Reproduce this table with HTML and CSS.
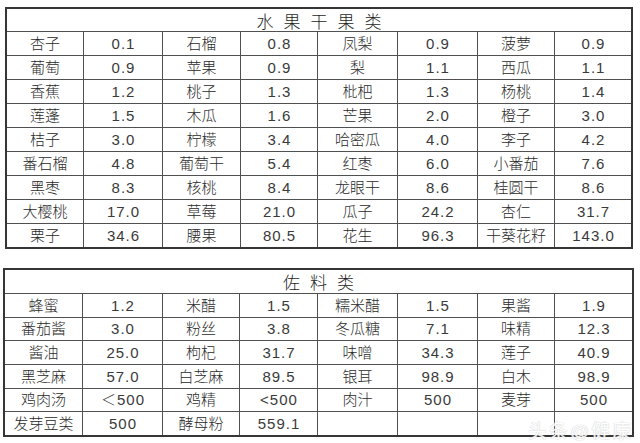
FILE: index.html
```html
<!DOCTYPE html>
<html lang="zh">
<head>
<meta charset="utf-8">
<title>水果干果类 / 佐料类</title>
<link rel="stylesheet" href="styles.css">
</head>
<body>
<div class="page">
  <div class="tbl t1">
    <div class="title">水果干果类</div>
    <div class="c">杏子</div><div class="c n">0.1</div><div class="c">石榴</div><div class="c n">0.8</div><div class="c">凤梨</div><div class="c n">0.9</div><div class="c">菠萝</div><div class="c n">0.9</div>
    <div class="c">葡萄</div><div class="c n">0.9</div><div class="c">苹果</div><div class="c n">0.9</div><div class="c">梨</div><div class="c n">1.1</div><div class="c">西瓜</div><div class="c n">1.1</div>
    <div class="c">香蕉</div><div class="c n">1.2</div><div class="c">桃子</div><div class="c n">1.3</div><div class="c">枇杷</div><div class="c n">1.3</div><div class="c">杨桃</div><div class="c n">1.4</div>
    <div class="c">莲蓬</div><div class="c n">1.5</div><div class="c">木瓜</div><div class="c n">1.6</div><div class="c">芒果</div><div class="c n">2.0</div><div class="c">橙子</div><div class="c n">3.0</div>
    <div class="c">桔子</div><div class="c n">3.0</div><div class="c">柠檬</div><div class="c n">3.4</div><div class="c">哈密瓜</div><div class="c n">4.0</div><div class="c">李子</div><div class="c n">4.2</div>
    <div class="c">番石榴</div><div class="c n">4.8</div><div class="c">葡萄干</div><div class="c n">5.4</div><div class="c">红枣</div><div class="c n">6.0</div><div class="c">小番茄</div><div class="c n">7.6</div>
    <div class="c">黑枣</div><div class="c n">8.3</div><div class="c">核桃</div><div class="c n">8.4</div><div class="c">龙眼干</div><div class="c n">8.6</div><div class="c">桂圆干</div><div class="c n">8.6</div>
    <div class="c">大樱桃</div><div class="c n">17.0</div><div class="c">草莓</div><div class="c n">21.0</div><div class="c">瓜子</div><div class="c n">24.2</div><div class="c">杏仁</div><div class="c n">31.7</div>
    <div class="c">栗子</div><div class="c n">34.6</div><div class="c">腰果</div><div class="c n">80.5</div><div class="c">花生</div><div class="c n">96.3</div><div class="c">干葵花籽</div><div class="c n">143.0</div>
  </div>

  <div class="tbl t2">
    <div class="title">佐料类</div>
    <div class="c">蜂蜜</div><div class="c n">1.2</div><div class="c">米醋</div><div class="c n">1.5</div><div class="c">糯米醋</div><div class="c n">1.5</div><div class="c">果酱</div><div class="c n">1.9</div>
    <div class="c">番茄酱</div><div class="c n">3.0</div><div class="c">粉丝</div><div class="c n">3.8</div><div class="c">冬瓜糖</div><div class="c n">7.1</div><div class="c">味精</div><div class="c n">12.3</div>
    <div class="c">酱油</div><div class="c n">25.0</div><div class="c">枸杞</div><div class="c n">31.7</div><div class="c">味噌</div><div class="c n">34.3</div><div class="c">莲子</div><div class="c n">40.9</div>
    <div class="c">黑芝麻</div><div class="c n">57.0</div><div class="c">白芝麻</div><div class="c n">89.5</div><div class="c">银耳</div><div class="c n">98.9</div><div class="c">白木</div><div class="c n">98.9</div>
    <div class="c">鸡肉汤</div><div class="c n">＜500</div><div class="c">鸡精</div><div class="c n">&lt;500</div><div class="c">肉汁</div><div class="c n">500</div><div class="c">麦芽</div><div class="c n">500</div>
    <div class="c">发芽豆类</div><div class="c n">500</div><div class="c">酵母粉</div><div class="c n">559.1</div><div class="c"></div><div class="c"></div><div class="c"></div><div class="c"></div>
  </div>
  <div class="mark">头条@健康</div>
</div>
</body>
</html>
```

FILE: styles.css
```css
html, body {
  margin: 0;
  padding: 0;
  background: #ffffff;
}
body {
  font-family: "Liberation Sans", "Noto Sans CJK SC", sans-serif;
  color: #2a2a2a;
  width: 640px;
  height: 443px;
  overflow: hidden;
}
.page {
  position: relative;
  width: 640px;
  height: 443px;
}
.tbl {
  display: grid;
  gap: 1px;
  background: #505050;
  border: 2px solid #363636;
}
.t1 {
  margin: 7px 0 0 5px;
  width: 624px;
  grid-template-columns: 76px 78px 77px 76px 79px 79px 76px 76px;
  grid-template-rows: 22px repeat(9, 23px);
}
.t2 {
  margin: 19px 0 0 3px;
  width: 627px;
  grid-template-columns: 77px 79px 76px 77px 79px 79px 76px 77px;
  grid-template-rows: 23px repeat(6, 22.67px);
}
.title {
  grid-column: 1 / -1;
  background: #ffffff;
  display: flex;
  align-items: center;
  justify-content: center;
  font-size: 17px;
  font-weight: 300;
  letter-spacing: 10px;
  padding-left: 10px;
  color: #1e1e1e;
}
.c {
  background: #ffffff;
  display: flex;
  align-items: center;
  justify-content: center;
  font-size: 15px;
  font-weight: 300;
  line-height: 1;
  white-space: nowrap;
}
.n {
  letter-spacing: 1px;
  padding-left: 1px;
  color: #3a3a3a;
}
.mark {
  position: absolute;
  left: 528px;
  top: 409px;
  font-size: 19px;
  color: #ffffff;
  letter-spacing: 2px;
  text-shadow: 0 0 1px #c8c8c8, 0 0 1px #d0d0d0;
  opacity: 0.9;
}
```
